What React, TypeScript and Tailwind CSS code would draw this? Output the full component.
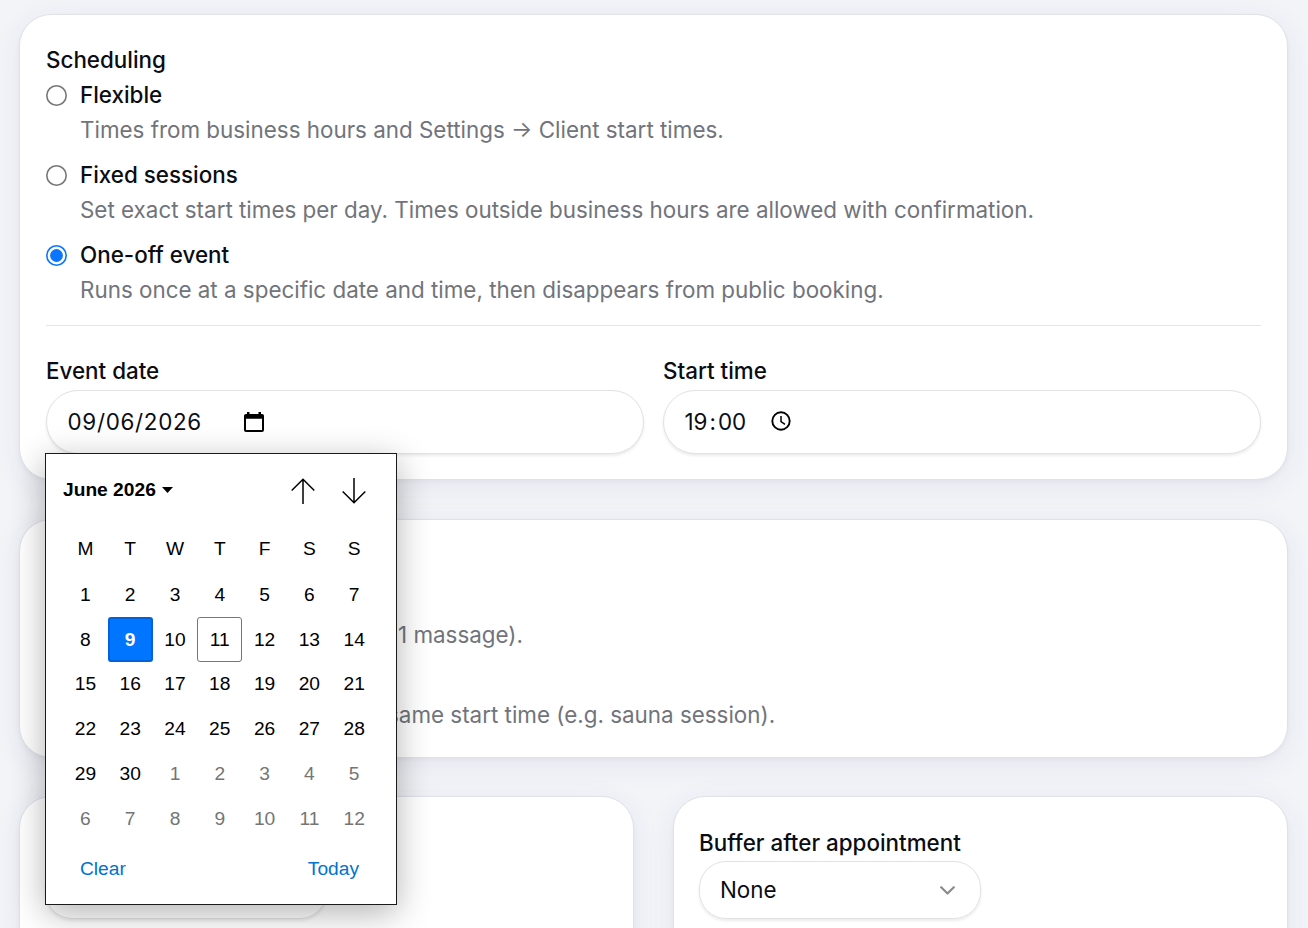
import type { ReactNode } from "react";

const WEEKDAYS = ["M", "T", "W", "T", "F", "S", "S"];
const DAYS = [
  ...Array.from({ length: 30 }, (_, i) => ({ day: i + 1, current: true })),
  ...Array.from({ length: 12 }, (_, i) => ({ day: i + 1, current: false })),
];

const OPTIONS = [
  { label: "Flexible", hint: "Times from business hours and Settings → Client start times.", checked: false },
  {
    label: "Fixed sessions",
    hint: "Set exact start times per day. Times outside business hours are allowed with confirmation.",
    checked: false,
  },
  {
    label: "One-off event",
    hint: "Runs once at a specific date and time, then disappears from public booking.",
    checked: true,
  },
];

function Card({ children, className = "" }: { children?: ReactNode; className?: string }) {
  return (
    <section
      className={`rounded-[32px] border border-[#e1e2e8] bg-white shadow-[0_2px_4px_rgba(20,20,50,0.04),0_6px_30px_rgba(60,60,130,0.07)] ${className}`}
    >
      {children}
    </section>
  );
}

function Radio({ checked }: { checked: boolean }) {
  return (
    <svg className="mt-[2px] shrink-0" width="21" height="21" viewBox="0 0 21 21" fill="none">
      <circle cx="10.500" cy="10.500" r="9.700" stroke={checked ? "#0a75ff" : "#767676"} strokeWidth="1.600" />
      {checked && <circle cx="10.500" cy="10.500" r="6.400" fill="#0a75ff" />}
    </svg>
  );
}

function Field({ label, children }: { label: string; children: ReactNode }) {
  return (
    <div>
      <div className="h-[35px] font-medium leading-[35px]">{label}</div>
      <div className="mt-[2px] flex h-[64px] items-center rounded-full border border-[#e2e2e5] bg-white px-[20.5px] shadow-[0_2px_3px_rgba(0,0,0,0.08)]">
        {children}
      </div>
    </div>
  );
}

function DatePicker() {
  return (
    <div className="absolute left-[45px] top-[453px] h-[452px] w-[352px] border border-[#1a1a1a] bg-white font-['Liberation_Sans',Arial,sans-serif] text-[19.2px] text-black shadow-[0_8px_32px_rgba(0,0,0,0.3)]">
      <div className="flex h-[72px] items-center pl-[17px] pr-[30px]">
        <span className="font-bold">June 2026</span>
        <svg className="ml-[6px]" width="11" height="6" viewBox="0 0 11 6">
          <path d="M0 0h11L5.500 6z" />
        </svg>
        <svg className="ml-auto mt-[1px]" width="24" height="26" viewBox="0 0 24 26" fill="none" stroke="#000" strokeWidth="1.500">
          <path d="M12 26V1M.7 12.500 12 1.200 23.300 12.500" />
        </svg>
        <svg className="ml-[27px] mt-[1px]" width="24" height="26" viewBox="0 0 24 26" fill="none" stroke="#000" strokeWidth="1.500">
          <path d="M12 0v25M.7 13.500 12 24.800 23.300 13.500" />
        </svg>
      </div>
      <div className="ml-[17px] grid h-[46px] w-[313.6px] grid-cols-7 items-center text-center">
        {WEEKDAYS.map((name, i) => (
          <span key={i}>{name}</span>
        ))}
      </div>
      <div className="ml-[17px] grid w-[313.6px] grid-cols-7 text-center">
        {DAYS.map(({ day, current }, i) => {
          let look = current ? "" : "text-[#757575]";
          if (i === 8) look = "rounded-[3px] border-2 border-[#0062d6] bg-[#0075ff] font-bold text-white";
          if (i === 10) look = "rounded-[3px] border border-[#767676]";
          return (
            <span key={i} className={`flex h-[44.8px] items-center justify-center pt-[1.5px] ${look}`}>
              {day}
            </span>
          );
        })}
      </div>
      <div className="mt-[17px] flex justify-between pl-[34px] pr-[37px] leading-[22px] text-[#0074cc]">
        <span>Clear</span>
        <span>Today</span>
      </div>
    </div>
  );
}

export default function App() {
  return (
    <div className="relative h-[928px] w-[1308px] overflow-hidden bg-[#f3f4f8] pl-[19px] pr-[20px] pt-[14px] font-[Inter,sans-serif] text-[22.4px] text-[#0b0d14]">
      <Card className="h-[466px] px-[26px] pt-[27px]">
        <h2 className="h-[35px] font-medium leading-[35px]">Scheduling</h2>
        <div className="flex flex-col gap-[10px]">
          {OPTIONS.map((option) => (
            <div key={option.label} className="leading-[35px]">
              <div className="flex items-center gap-[13px] font-medium">
                <Radio checked={option.checked} />
                {option.label}
              </div>
              <p className="pl-[34px] text-[#71747b]">{option.hint}</p>
            </div>
          ))}
        </div>
        <div className="mt-[18px] grid grid-cols-2 gap-[19px] border-t border-[#e4e5e9] pt-[27px]">
          <Field label="Event date">
            <span className="tracking-[0.031em]">09/06/2026</span>
            <svg className="ml-[42px]" width="20" height="20" viewBox="0 0 20 21" preserveAspectRatio="none">
              <path d="M3 0h2.500v2h9V0H17v2h1q2 0 2 2v15q0 2-2 2H2q-2 0-2-2V4q0-2 2-2h1zM2 7v12h16V7z" fillRule="evenodd" />
            </svg>
          </Field>
          <Field label="Start time">
            <span>
              19<span className="px-[2px]">:</span>00
            </span>
            <svg className="mb-[2px] ml-[25px]" width="20" height="20" viewBox="0 0 20 20" fill="none" stroke="#000">
              <circle cx="10" cy="10" r="8.700" strokeWidth="1.900" />
              <path d="M10 5v5.500l4 2.800" strokeWidth="1.500" />
            </svg>
          </Field>
        </div>
      </Card>
      <Card className="mt-[39px] h-[239px] px-[25px] pt-[97px] text-[#71747b]">
        <p className="pl-[353px] leading-[35px]">1 massage).</p>
        <p className="mt-[45px] pl-[342px] leading-[35px]">same start time (e.g. sauna session).</p>
      </Card>
      <div className="mt-[38px] grid grid-cols-2 gap-[39px]">
        <Card className="h-[200px] px-[25px] pt-[64px]">
          <div className="h-[58px] w-[282px] rounded-[27px] border border-[#e2e2e5] shadow-[0_2px_3px_rgba(0,0,0,0.08)]" />
        </Card>
        <Card className="h-[200px] px-[25px] pt-[28px]">
          <div className="h-[35px] font-medium leading-[35px]">Buffer after appointment</div>
          <div className="mt-px flex h-[58px] w-[282px] items-center justify-between rounded-[27px] border border-[#e2e2e5] pl-[20px] pr-[25px] shadow-[0_2px_3px_rgba(0,0,0,0.08)]">
            None
            <svg width="15" height="9" viewBox="0 0 15 9" fill="none" stroke="#8b8b8d" strokeWidth="2.200" strokeLinecap="round" strokeLinejoin="round">
              <path d="m1.200 1.200 6.300 6.300 6.300-6.300" />
            </svg>
          </div>
        </Card>
      </div>
      <DatePicker />
    </div>
  );
}
